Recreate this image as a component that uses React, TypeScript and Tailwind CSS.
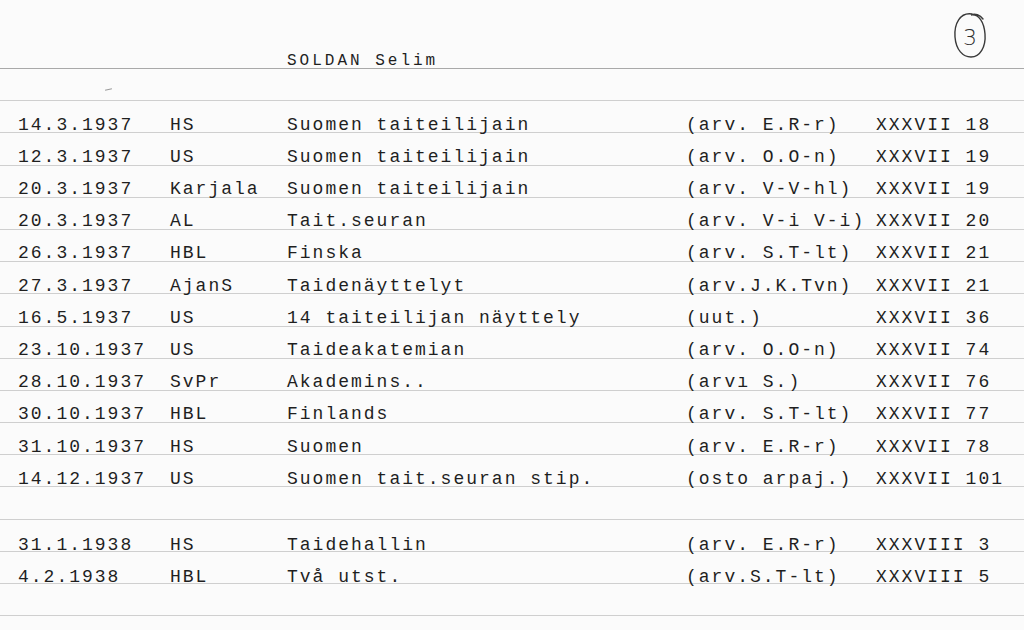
const rows: [string, string, string, string, string][] = [
  ['14.3.1937', 'HS', 'Suomen taiteilijain', '(arv. E.R-r)', 'XXXVII 18'],
  ['12.3.1937', 'US', 'Suomen taiteilijain', '(arv. O.O-n)', 'XXXVII 19'],
  ['20.3.1937', 'Karjala', 'Suomen taiteilijain', '(arv. V-V-hl)', 'XXXVII 19'],
  ['20.3.1937', 'AL', 'Tait.seuran', '(arv. V-i V-i)', 'XXXVII 20'],
  ['26.3.1937', 'HBL', 'Finska', '(arv. S.T-lt)', 'XXXVII 21'],
  ['27.3.1937', 'AjanS', 'Taidenäyttelyt', '(arv.J.K.Tvn)', 'XXXVII 21'],
  ['16.5.1937', 'US', '14 taiteilijan näyttely', '(uut.)', 'XXXVII 36'],
  ['23.10.1937', 'US', 'Taideakatemian', '(arv. O.O-n)', 'XXXVII 74'],
  ['28.10.1937', 'SvPr', 'Akademins..', '(arvı S.)', 'XXXVII 76'],
  ['30.10.1937', 'HBL', 'Finlands', '(arv. S.T-lt)', 'XXXVII 77'],
  ['31.10.1937', 'HS', 'Suomen', '(arv. E.R-r)', 'XXXVII 78'],
  ['14.12.1937', 'US', 'Suomen tait.seuran stip.', '(osto arpaj.)', 'XXXVII 101'],
];

const rows1938: [string, string, string, string, string][] = [
  ['31.1.1938', 'HS', 'Taidehallin', '(arv. E.R-r)', 'XXXVIII 3'],
  ['4.2.1938', 'HBL', 'Två utst.', '(arv.S.T-lt)', 'XXXVIII 5'],
];

function CardRow({ cells, low }: { cells?: [string, string, string, string, string]; low?: boolean }) {
  return (
    <div
      className={`grid h-[32.2px] shrink-0 grid-cols-[152px_117px_399px_190px_1fr] items-end border-b border-[#cfcfcf] pl-[18px] text-[18px] tracking-[2px] whitespace-nowrap ${
        low ? 'leading-[0.55]' : 'leading-[0.82]'
      }`}
    >
      {cells?.map((c, i) => (
        <span key={i}>{c}</span>
      ))}
    </div>
  );
}

function CircledNumber() {
  return (
    <div className="relative flex h-[50px] w-[40px] items-center justify-center pt-[6px]">
      <svg className="absolute inset-0" width="40" height="50" viewBox="0 0 40 50" fill="none">
        <path
          d="M22 4 C10 2 4 14 5 27 C6 40 13 47 21 47 C30 47 36 37 35 24 C34 12 29 4 21 5 C25 3 30 5 33 9"
          stroke="#3a3a3a"
          strokeWidth="1.4"
          strokeLinecap="round"
        />
      </svg>
      <span className="font-['DejaVu_Sans',sans-serif] text-[22px] font-light leading-none text-[#2e2e2e]">
        3
      </span>
    </div>
  );
}

export default function App() {
  return (
    <div className="flex h-[630px] w-[1024px] flex-col overflow-hidden bg-[#fbfbfb] font-['Liberation_Mono',monospace] text-[#1f1f1f]">
      {/* card header */}
      <div className="flex h-[69px] shrink-0 items-end border-b border-[#a9a9a9]">
        <span className="mb-[1px] ml-[287px] text-[16px] leading-[0.75] tracking-[3px]">SOLDAN Selim</span>
        <div className="mt-[10px] mr-[34px] ml-auto self-start">
          <CircledNumber />
        </div>
      </div>

      {/* empty ruled line with pencil mark */}
      <div className="relative h-[32.2px] shrink-0 border-b border-[#cfcfcf]">
        <span className="absolute top-[20px] left-[105px] h-px w-[7px] -rotate-12 bg-[#9a9a9a]" />
      </div>

      {rows.map((r, i) => (
        <CardRow key={i} cells={r} />
      ))}

      <CardRow />

      {rows1938.map((r, i) => (
        <CardRow key={i} cells={r} low />
      ))}

      <CardRow />
      <CardRow />
    </div>
  );
}
